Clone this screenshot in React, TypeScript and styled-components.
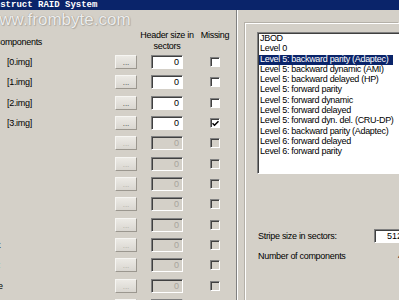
import React from "react";
import styled, { createGlobalStyle } from "styled-components";

const GlobalStyle = createGlobalStyle`
  html, body { margin: 0; padding: 0; background: #d4d0c8; }
  body {
    font-family: "Liberation Sans", Arial, sans-serif;
    font-size: 9px;
    letter-spacing: -0.3px;
    color: #000;
  }
`;

const Window = styled.div`
  position: relative;
  width: 399px;
  height: 300px;
  overflow: hidden;
  background: #d4d0c8;
`;

const TitleBar = styled.div`
  height: 10px;
  background: #0a246a;
  overflow: hidden;
  white-space: nowrap;
`;

const TitleText = styled.span`
  display: block;
  margin-left: -16px;
  font-family: "Liberation Mono", "Courier New", monospace;
  font-weight: bold;
  font-size: 9px;
  line-height: 10px;
  letter-spacing: 0;
  color: #fff;
`;

const Watermark = styled.div`
  position: absolute;
  top: 10px;
  left: -13px;
  font-family: "Liberation Sans", Arial, sans-serif;
  font-size: 17px;
  letter-spacing: 0;
  line-height: 20px;
  color: rgba(255, 255, 255, 0.85);
  text-shadow: 0 0 1px rgba(110, 106, 100, 0.7), 1px 1px 1px rgba(0, 0, 0, 0.15);
  pointer-events: none;
  white-space: nowrap;
`;

const Content = styled.div`
  display: flex;
  align-items: flex-start;
  height: 290px;
`;

const LeftPanel = styled.div`
  width: 236px;
  height: 290px;
  flex: none;
  border-right: 1px solid #808080;
  box-shadow: 1px 0 0 #fff;
  padding-top: 20px;
  box-sizing: content-box;
  overflow: hidden;
`;

const HeaderRow = styled.div`
  display: grid;
  grid-template-columns: 137px 60px 36px;
  height: 22px;
  line-height: 11px;
`;

const HeaderLabel = styled.div`
  align-self: end;
  padding-bottom: 4px;
  overflow: hidden;
  text-indent: -6px;
  white-space: nowrap;
`;

const HeaderCell = styled.div`
  text-align: center;
  white-space: nowrap;
`;

const Row = styled.div`
  display: flex;
  align-items: center;
  height: 20.33px;
`;

const RowLabel = styled.div<{ $cut?: boolean }>`
  width: 115px;
  flex: none;
  box-sizing: border-box;
  overflow: hidden;
  padding-left: ${(p) => (p.$cut ? "0" : "7px")};
  text-indent: ${(p) => (p.$cut ? "-2px" : "0")};
  white-space: nowrap;
`;

const BrowseButton = styled.div<{ $disabled?: boolean }>`
  width: 22px;
  height: 14px;
  flex: none;
  margin-right: 14px;
  box-sizing: border-box;
  border: 1px solid;
  border-color: #f6f5f2 #9b978f #9b978f #f6f5f2;
  background: linear-gradient(#eceae5, #d9d6d0);
  display: flex;
  align-items: center;
  justify-content: center;
  font-size: 8px;
  line-height: 8px;
  padding-top: 2px;
  letter-spacing: 0;
  color: ${(p) => (p.$disabled ? "#b0aca4" : "#404040")};
`;

const NumberBox = styled.div<{ $disabled?: boolean }>`
  width: 32px;
  height: 14px;
  flex: none;
  margin-right: 27px;
  box-sizing: border-box;
  border: 1px solid;
  border-color: #808080 #fff #fff #808080;
  box-shadow: inset 1px 1px 0 #404040;
  background: ${(p) => (p.$disabled ? "#d4d0c8" : "#fff")};
  color: ${(p) => (p.$disabled ? "#a8a49c" : "#000")};
  text-align: right;
  padding-right: 3px;
  font-size: 9px;
  line-height: 12px;
  letter-spacing: 0;
`;

const CheckBox = styled.div<{ $disabled?: boolean }>`
  width: 10px;
  height: 10px;
  flex: none;
  box-sizing: border-box;
  border: 1px solid;
  border-color: #808080 #fff #fff #808080;
  box-shadow: inset 1px 1px 0 #404040;
  background: ${(p) => (p.$disabled ? "#d4d0c8" : "#fff")};
  display: flex;
  align-items: center;
  justify-content: center;
`;

const RightPanel = styled.div`
  flex: 1;
  margin-left: 8px;
  margin-top: 13px;
  height: 290px;
  border-left: 1px solid #fff;
  border-top: 1px solid #fff;
  box-shadow: -1px -1px 0 #b4b0a8;
  padding: 8px 0 0 11px;
  display: flex;
  flex-direction: column;
  min-width: 0;
`;

const ListBox = styled.div`
  width: 170px;
  height: 142px;
  flex: none;
  box-sizing: border-box;
  border: 1px solid;
  border-color: #808080 #fff #fff #808080;
  box-shadow: inset 1px 1px 0 #404040;
  background: #fff;
  overflow: hidden;
`;

const ListItem = styled.div`
  height: 10.3px;
  padding-left: 1px;
  white-space: nowrap;
`;

const ItemText = styled.span<{ $selected?: boolean }>`
  display: inline-block;
  line-height: 8px;
  height: 10.3px;
  box-sizing: border-box;
  padding: 0 5px 0 1px;
  background: ${(p) => (p.$selected ? "#0a246a" : "transparent")};
  color: ${(p) => (p.$selected ? "#fff" : "#000")};
`;

const FieldRow = styled.div<{ $top: number }>`
  display: grid;
  grid-template-columns: 117px 32px;
  align-items: center;
  height: 14px;
  margin-top: ${(p) => p.$top}px;
  white-space: nowrap;
`;

const FieldLabel = styled.div`
  padding-left: 1px;
`;

const FieldValue = styled.div`
  text-align: right;
  padding-right: 3px;
  letter-spacing: 0;
`;

const FieldBox = styled(NumberBox)`
  margin-right: 0;
`;

const Check = () => (
  <svg width="7" height="7" viewBox="0 0 7 7">
    <polyline points="0.5,3.2 2.5,5.2 6.5,1.2" fill="none" stroke="#000" strokeWidth="1.5" />
  </svg>
);

type RowData = { label?: string; cut?: boolean; enabled: boolean; checked?: boolean };

const rows: RowData[] = [
  { label: "[0.img]", enabled: true },
  { label: "[1.img]", enabled: true },
  { label: "[2.img]", enabled: true },
  { label: "[3.img]", enabled: true, checked: true },
  { enabled: false },
  { enabled: false },
  { enabled: false },
  { enabled: false },
  { enabled: false },
  { label: "t", cut: true, enabled: false },
  { label: ":", cut: true, enabled: false },
  { label: "e", cut: true, enabled: false },
  { enabled: false },
];

const levels = [
  "JBOD",
  "Level 0",
  "Level 5: backward parity (Adaptec)",
  "Level 5: backward dynamic (AMI)",
  "Level 5: backward delayed (HP)",
  "Level 5: forward parity",
  "Level 5: forward dynamic",
  "Level 5: forward delayed",
  "Level 5: forward dyn. del. (CRU-DP)",
  "Level 6: backward parity (Adaptec)",
  "Level 6: forward delayed",
  "Level 6: forward parity",
];

export default function App() {
  return (
    <>
      <GlobalStyle />
      <Window>
        <TitleBar>
          <TitleText>Construct RAID System</TitleText>
        </TitleBar>
        <Content>
          <LeftPanel>
            <HeaderRow>
              <HeaderLabel>Components</HeaderLabel>
              <HeaderCell>
                Header size in
                <br />
                sectors
              </HeaderCell>
              <HeaderCell>Missing</HeaderCell>
            </HeaderRow>
            {rows.map((r, i) => (
              <Row key={i}>
                <RowLabel $cut={r.cut}>{r.label ?? ""}</RowLabel>
                <BrowseButton $disabled={!r.enabled}>...</BrowseButton>
                <NumberBox $disabled={!r.enabled}>0</NumberBox>
                <CheckBox $disabled={!r.enabled}>{r.checked ? <Check /> : null}</CheckBox>
              </Row>
            ))}
          </LeftPanel>
          <RightPanel>
            <ListBox>
              {levels.map((l, i) => (
                <ListItem key={l}>
                  <ItemText $selected={i === 2}>{l}</ItemText>
                </ListItem>
              ))}
            </ListBox>
            <FieldRow $top={55}>
              <FieldLabel>Stripe size in sectors:</FieldLabel>
              <FieldBox>512</FieldBox>
            </FieldRow>
            <FieldRow $top={6}>
              <FieldLabel>Number of components</FieldLabel>
              <FieldValue>4</FieldValue>
            </FieldRow>
          </RightPanel>
        </Content>
        <Watermark>www.frombyte.com</Watermark>
      </Window>
    </>
  );
}
